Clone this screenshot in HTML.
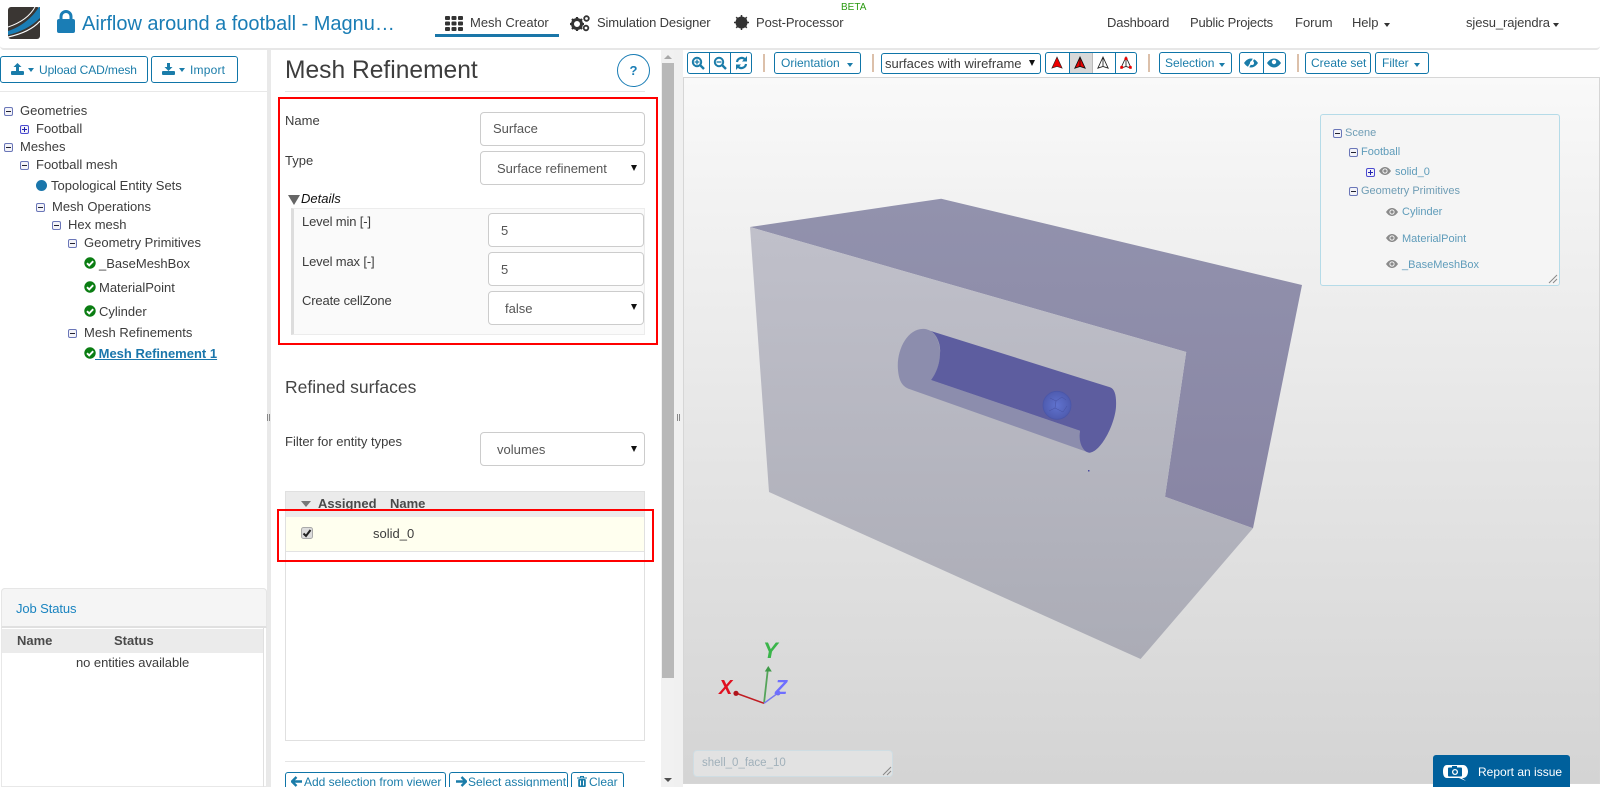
<!DOCTYPE html>
<html><head><meta charset="utf-8"><title>Mesh Refinement</title>
<style>
*{box-sizing:border-box}
html{margin:0;padding:0;width:1600px;height:787px;overflow:hidden}
body{margin:0;padding:0;width:1600px;height:787px;overflow:hidden;position:relative;background:#fff;font-family:"Liberation Sans",sans-serif;font-size:13px;color:#3c3c3c}
.a,.t,.btn,.box,.sel{position:absolute}
.t{white-space:nowrap;line-height:20px;height:20px}
.btn{border:1px solid #0f75a8;border-radius:3px;background:#fff;color:#1a7ca9;font-size:12px;line-height:20px;white-space:nowrap}
.box{border:1px solid #ccc;border-radius:4px;background:#fff}
.tri{position:absolute;width:0;height:0;border-left:3.5px solid transparent;border-right:3.5px solid transparent;border-top:6px solid #111}
.car{position:absolute;width:0;height:0;border-left:3.5px solid transparent;border-right:3.5px solid transparent;border-top:4px solid currentColor}
.sep{position:absolute;width:2px;top:54px;height:18px;background:#dcc0aa}
.m,.p{position:absolute;width:9px;height:9px;border:1px solid #6a76b8;border-radius:2px;background:#f3f3f8}
.m:after,.p:after{content:"";position:absolute;left:1px;top:3px;width:5px;height:1px;background:#223}
.p{border-color:#4b4bd0}
.p:after{background:#2222b0}
.p:before{content:"";position:absolute;left:3px;top:1px;width:1px;height:5px;background:#2222b0}
.s{color:#5f9cba;font-size:11px}
.div{position:absolute;top:0;bottom:0;width:1px;background:#0f75a8}
.grip{position:absolute;width:1px;height:7px;background:#888}
</style></head>
<body>
<svg width="0" height="0" style="position:absolute">
<symbol id="ck" viewBox="0 0 12 12"><circle cx="6" cy="6" r="5.7" fill="#0a7d12"/><path d="M3 6.2l2.2 2.2L9.2 4.2" fill="none" stroke="#fff" stroke-width="1.9"/></symbol>
<symbol id="eye" viewBox="0 0 12 8"><path d="M0 4C2 1 4 0 6 0s4 1 6 4c-2 3-4 4-6 4S2 7 0 4z" fill="#8a8a8a"/><circle cx="6" cy="4" r="2.6" fill="#f4f4f4"/><circle cx="6" cy="4" r="1.6" fill="#8a8a8a"/></symbol>
</svg>

<!-- header -->
<div class="a" style="left:0;top:0;width:1600px;height:50px;background:#fff;border-bottom:2px solid #e7e7e7;border-radius:0 0 4px 4px"></div>
<svg class="a" style="left:8px;top:7px" width="32" height="32" viewBox="0 0 32 32"><rect width="32" height="32" rx="3" fill="#3a3633"/><path d="M0 24C13 20 24 11 31 0h1v11C24 19 13 25 0 28z" fill="#1a7db5"/><path d="M0 20C12 16 22 9 27 0" fill="none" stroke="#fff" stroke-width="1"/><path d="M0 30C14 27 25 22 32 14" fill="none" stroke="#fff" stroke-width="1.2"/></svg>
<svg class="a" style="left:57px;top:10px" width="18" height="23" viewBox="0 0 18 23"><path d="M4 10V6.5a5 5 0 0 1 10 0V10" fill="none" stroke="#1a7db5" stroke-width="3"/><rect y="9" width="18" height="14" rx="2" fill="#1a7db5"/></svg>
<div class="t" style="left:82px;top:14px;font-size:20px;color:#1a7db5;line-height:20px;letter-spacing:-.02px">Airflow around a football - Magnu…</div>

<svg class="a" style="left:445px;top:16px" width="18" height="15" viewBox="0 0 18 15" fill="#333"><rect width="5" height="4" rx="1"/><rect x="6.5" width="5" height="4" rx="1"/><rect x="13" width="5" height="4" rx="1"/><rect y="5.5" width="5" height="4" rx="1"/><rect x="6.5" y="5.5" width="5" height="4" rx="1"/><rect x="13" y="5.5" width="5" height="4" rx="1"/><rect y="11" width="5" height="4" rx="1"/><rect x="6.5" y="11" width="5" height="4" rx="1"/><rect x="13" y="11" width="5" height="4" rx="1"/></svg>
<div class="t" style="left:470px;top:13px">Mesh Creator</div>
<div class="a" style="left:435px;top:34px;width:124px;height:3px;background:#1a76a8"></div>

<svg class="a" style="left:570px;top:14px" width="21" height="18" viewBox="0 0 21 18" fill="#333"><circle cx="7" cy="10" r="4.5" fill="none" stroke="#333" stroke-width="3"/><path d="M7 3v2M7 15v2M0 10h2M12 10h2M2 5l1.5 1.5M12 15l-1.5-1.5M2 15l1.5-1.5M12 5l-1.5 1.5" stroke="#333" stroke-width="2.2"/><circle cx="16.5" cy="4.5" r="2.3" fill="none" stroke="#333" stroke-width="1.8"/><circle cx="16" cy="14" r="2.3" fill="none" stroke="#333" stroke-width="1.8"/></svg>
<div class="t" style="left:597px;top:13px;letter-spacing:-.15px">Simulation Designer</div>
<svg class="a" style="left:734px;top:15px" width="15" height="15" viewBox="0 0 15 15"><circle cx="7.5" cy="7.5" r="6" fill="#333"/><path d="M7.5 0v15M0 7.5h15M2.2 2.2l10.600 10.600M12.800 2.2L2.2 12.800" stroke="#333" stroke-width="1.5"/></svg>
<div class="t" style="left:756px;top:13px;letter-spacing:-.1px">Post-Processor</div>
<div class="t" style="left:841px;top:-2px;font-size:10px;color:#2a9a10">BETA</div>

<div class="t" style="left:1107px;top:13px;letter-spacing:-.15px">Dashboard</div>
<div class="t" style="left:1190px;top:13px;letter-spacing:-.2px">Public Projects</div>
<div class="t" style="left:1295px;top:13px">Forum</div>
<div class="t" style="left:1352px;top:13px;letter-spacing:-.1px">Help</div>
<div class="car" style="left:1384px;top:23px;color:#333"></div>
<div class="t" style="left:1466px;top:13px;letter-spacing:-.1px">sjesu_rajendra</div>
<div class="car" style="left:1553px;top:23px;color:#333"></div>

<!-- left panel -->
<div class="btn" style="left:0;top:56px;width:148px;height:27px;padding-left:38px;line-height:26px;letter-spacing:-.1px">Upload CAD/mesh</div>
<svg class="a" style="left:11px;top:63px" width="13" height="12" viewBox="0 0 13 12" fill="#1a7ca9"><path d="M6.5 0L10.5 4H8v4H5V4H2.5z"/><rect y="8" width="13" height="4" rx="1"/></svg>
<div class="car" style="left:28px;top:68px;color:#1a7ca9"></div>
<div class="btn" style="left:151px;top:56px;width:87px;height:27px;padding-left:38px;line-height:26px;letter-spacing:.2px">Import</div>
<svg class="a" style="left:162px;top:63px" width="13" height="12" viewBox="0 0 13 12" fill="#1a7ca9"><path d="M6.5 8L10.5 4H8V0H5v4H2.5z"/><rect y="8" width="13" height="4" rx="1"/></svg>
<div class="car" style="left:179px;top:68px;color:#1a7ca9"></div>
<div class="a" style="left:0;top:91px;width:267px;height:1px;background:#e8e8e8"></div>

<i class="m" style="left:4px;top:107px"></i><div class="t" style="left:20px;top:101px">Geometries</div>
<i class="p" style="left:20px;top:125px"></i><div class="t" style="left:36px;top:119px">Football</div>
<i class="m" style="left:4px;top:143px"></i><div class="t" style="left:20px;top:137px">Meshes</div>
<i class="m" style="left:20px;top:161px"></i><div class="t" style="left:36px;top:155px">Football mesh</div>
<div class="a" style="left:36px;top:180px;width:11px;height:11px;border-radius:50%;background:#1a76ab"></div><div class="t" style="left:51px;top:176px">Topological Entity Sets</div>
<i class="m" style="left:36px;top:203px"></i><div class="t" style="left:52px;top:197px">Mesh Operations</div>
<i class="m" style="left:52px;top:221px"></i><div class="t" style="left:68px;top:215px">Hex mesh</div>
<i class="m" style="left:68px;top:239px"></i><div class="t" style="left:84px;top:233px">Geometry Primitives</div>
<svg class="a" style="left:84px;top:257px" width="12" height="12"><use href="#ck"/></svg><div class="t" style="left:99px;top:254px">_BaseMeshBox</div>
<svg class="a" style="left:84px;top:281px" width="12" height="12"><use href="#ck"/></svg><div class="t" style="left:99px;top:278px">MaterialPoint</div>
<svg class="a" style="left:84px;top:305px" width="12" height="12"><use href="#ck"/></svg><div class="t" style="left:99px;top:302px">Cylinder</div>
<i class="m" style="left:68px;top:329px"></i><div class="t" style="left:84px;top:323px">Mesh Refinements</div>
<svg class="a" style="left:84px;top:347px" width="12" height="12"><use href="#ck"/></svg><div class="t" style="left:95px;top:344px;font-weight:bold;color:#1a76ab;text-decoration:underline">&nbsp;Mesh Refinement 1</div>

<div class="a" style="left:1px;top:588px;width:266px;height:199px;border:1px solid #e8e8e8;border-radius:4px 4px 0 0;background:#fff"></div>
<div class="a" style="left:1px;top:588px;width:266px;height:40px;background:#f5f5f5;border:1px solid #e6e6e6;border-bottom:2px solid #e0e0e0;border-radius:4px 4px 0 0"></div>
<div class="t" style="left:16px;top:599px;color:#1a84c0;letter-spacing:-.1px">Job Status</div>
<div class="a" style="left:2px;top:629px;width:261px;height:24px;background:#ebebeb"></div>
<div class="a" style="left:263px;top:628px;width:1px;height:159px;background:#e0e0e0"></div>
<div class="t" style="left:17px;top:631px;font-weight:bold;color:#4a4a4a">Name</div>
<div class="t" style="left:114px;top:631px;font-weight:bold;color:#4a4a4a">Status</div>
<div class="t" style="left:76px;top:653px;font-size:13px;letter-spacing:-.05px">no entities available</div>

<div class="a" style="left:267px;top:50px;width:4px;height:737px;background:#e9e9e9"></div>
<i class="grip" style="left:267px;top:414px"></i><i class="grip" style="left:269px;top:414px"></i>

<!-- center panel -->
<div class="t" style="left:285px;top:59px;font-size:24.6px;line-height:24px;height:24px;color:#3d3d3d">Mesh Refinement</div>
<div class="a" style="left:617px;top:54px;width:33px;height:33px;border:1px solid #1a7db5;border-radius:50%;color:#1a7db5;font-weight:bold;font-size:13px;line-height:31px;text-align:center">?</div>
<div class="a" style="left:285px;top:91px;width:360px;height:1px;background:#e5e5e5"></div>
<div class="a" style="left:278px;top:97px;width:380px;height:248px;border:2px solid #f00"></div>

<div class="t" style="left:285px;top:111px">Name</div>
<div class="box" style="left:480px;top:112px;width:165px;height:34px"></div>
<div class="t" style="left:493px;top:119px;color:#555">Surface</div>
<div class="t" style="left:285px;top:151px">Type</div>
<div class="box" style="left:480px;top:151px;width:165px;height:34px"></div>
<div class="t" style="left:497px;top:159px;color:#555">Surface refinement</div>
<div class="tri" style="left:631px;top:165px"></div>

<div class="a" style="left:288px;top:195px;width:0;height:0;border-left:6px solid transparent;border-right:6px solid transparent;border-top:10px solid #666"></div>
<div class="t" style="left:301px;top:189px;font-style:italic;color:#111">Details</div>
<div class="a" style="left:291px;top:208px;width:354px;height:127px;background:#fafafa;border:1px solid #ececec;border-left:3px solid #ddd"></div>
<div class="t" style="left:302px;top:212px;letter-spacing:-.15px">Level min [-]</div>
<div class="box" style="left:488px;top:213px;width:156px;height:34px"></div>
<div class="t" style="left:501px;top:221px;color:#555">5</div>
<div class="t" style="left:302px;top:252px;letter-spacing:-.15px">Level max [-]</div>
<div class="box" style="left:488px;top:252px;width:156px;height:34px"></div>
<div class="t" style="left:501px;top:260px;color:#555">5</div>
<div class="t" style="left:302px;top:291px;letter-spacing:-.15px">Create cellZone</div>
<div class="box" style="left:488px;top:291px;width:156px;height:34px"></div>
<div class="t" style="left:505px;top:299px;color:#555">false</div>
<div class="tri" style="left:631px;top:304px"></div>

<div class="t" style="left:285px;top:377px;font-size:17.5px;color:#444">Refined surfaces</div>
<div class="t" style="left:285px;top:432px">Filter for entity types</div>
<div class="box" style="left:480px;top:432px;width:165px;height:34px"></div>
<div class="t" style="left:497px;top:440px;color:#555">volumes</div>
<div class="tri" style="left:631px;top:446px"></div>

<div class="a" style="left:285px;top:491px;width:360px;height:250px;border:1px solid #e0e0e0;background:#fff"></div>
<div class="a" style="left:286px;top:492px;width:358px;height:25px;background:#ebebeb"></div>
<div class="a" style="left:301px;top:501px;width:0;height:0;border-left:5px solid transparent;border-right:5px solid transparent;border-top:6px solid #777"></div>
<div class="t" style="left:318px;top:494px;font-weight:bold;color:#4a4a4a">Assigned</div>
<div class="t" style="left:390px;top:494px;font-weight:bold;color:#4a4a4a">Name</div>
<div class="a" style="left:286px;top:517px;width:358px;height:35px;background:#ffffef;border-bottom:1px solid #e3e3e3"></div>
<svg class="a" style="left:301px;top:527px" width="12" height="12" viewBox="0 0 12 12"><rect x=".5" y=".5" width="11" height="11" rx="2" fill="#dcdcdc" stroke="#aaa"/><path d="M2.5 6.5L5 9l4.5-6" fill="none" stroke="#222" stroke-width="2"/></svg>
<div class="t" style="left:373px;top:524px">solid_0</div>
<div class="a" style="left:277px;top:509px;width:377px;height:53px;border:2px solid #f00"></div>

<div class="a" style="left:285px;top:761px;width:360px;height:1px;background:#e5e5e5"></div>
<div class="btn" style="left:285px;top:772px;width:161px;height:15px;border-bottom:0;border-radius:3px 3px 0 0;padding-left:18px;font-size:12px;line-height:19px">Add selection from viewer</div>
<svg class="a" style="left:291px;top:776px" width="11" height="11" viewBox="0 0 11 11"><path d="M5.5 1L1 5.5 5.5 10M1.5 5.5H11" fill="none" stroke="#1a7ca9" stroke-width="2.4"/></svg>
<div class="btn" style="left:449px;top:772px;width:119px;height:15px;border-bottom:0;border-radius:3px 3px 0 0;padding-left:18px;font-size:12px;line-height:19px">Select assignment</div>
<svg class="a" style="left:456px;top:776px" width="11" height="11" viewBox="0 0 11 11"><path d="M5.5 1L10 5.5 5.5 10M9.5 5.5H0" fill="none" stroke="#1a7ca9" stroke-width="2.4"/></svg>
<div class="btn" style="left:571px;top:772px;width:53px;height:15px;border-bottom:0;border-radius:3px 3px 0 0;padding-left:17px;font-size:12px;line-height:19px">Clear</div>
<svg class="a" style="left:577px;top:776px" width="10" height="11" viewBox="0 0 10 11"><path d="M0 2h10M3.5 2V.5h3V2" fill="none" stroke="#1a7ca9"/><rect x="1.2" y="3" width="7.6" height="8" rx="1" fill="#1a7ca9"/><path d="M3.5 4.5v5M6.5 4.5v5" stroke="#fff"/></svg>

<!-- scrollbar -->
<div class="a" style="left:661px;top:50px;width:13px;height:737px;background:#f1f1f1"></div>
<div class="a" style="left:662px;top:63px;width:12px;height:615px;background:#b8b8b8"></div>
<div class="a" style="left:664px;top:55px;width:0;height:0;border-left:4px solid transparent;border-right:4px solid transparent;border-bottom:4px solid #a8a8a8"></div>
<div class="a" style="left:664px;top:778px;width:0;height:0;border-left:4px solid transparent;border-right:4px solid transparent;border-top:4px solid #505050"></div>
<div class="a" style="left:674px;top:50px;width:9px;height:737px;background:#f0f0f0"></div>
<i class="grip" style="left:677px;top:414px"></i><i class="grip" style="left:679px;top:414px"></i>

<!-- toolbar -->
<div class="btn" style="left:687px;top:52px;width:65px;height:22px"><i class="div" style="left:21px"></i><i class="div" style="left:42px"></i></div>
<svg class="a" style="left:691px;top:56px" width="14" height="14" viewBox="0 0 14 14"><circle cx="6" cy="6" r="4.2" fill="none" stroke="#1a7ca9" stroke-width="2"/><path d="M9 9l4 4" stroke="#1a7ca9" stroke-width="2.4"/><path d="M6 3.5v5M3.5 6h5" stroke="#1a7ca9" stroke-width="1.3"/></svg>
<svg class="a" style="left:713px;top:56px" width="14" height="14" viewBox="0 0 14 14"><circle cx="6" cy="6" r="4.2" fill="none" stroke="#1a7ca9" stroke-width="2"/><path d="M9 9l4 4" stroke="#1a7ca9" stroke-width="2.4"/><path d="M3.5 6h5" stroke="#1a7ca9" stroke-width="1.3"/></svg>
<svg class="a" style="left:735px;top:56px" width="13" height="14" viewBox="0 0 13 14"><path d="M2 6a4.6 4.6 0 0 1 8-2.5M11 8a4.6 4.6 0 0 1-8 2.5" fill="none" stroke="#1a7ca9" stroke-width="2.2"/><path d="M12 0v5.5H7zM1 14V8.5h5z" fill="#1a7ca9"/></svg>
<i class="sep" style="left:763px"></i>
<div class="btn" style="left:774px;top:52px;width:87px;height:22px;padding-left:6px">Orientation</div>
<div class="car" style="left:847px;top:63px;color:#1a7ca9"></div>
<i class="sep" style="left:872px"></i>
<div class="a" style="left:881px;top:53px;width:160px;height:21px;border:1px solid #0f75a8;border-radius:3px"></div>
<div class="t" style="left:885px;top:54px">surfaces with wireframe</div>
<div class="tri" style="left:1029px;top:60px"></div>

<div class="btn" style="left:1045px;top:52px;width:92px;height:22px;overflow:hidden"><i class="a" style="left:23px;top:0;width:24px;height:20px;background:#d8d8d8"></i><i class="div" style="left:23px"></i><i class="div" style="left:46px;background:#bbb"></i><i class="div" style="left:69px"></i></div>
<svg class="a" style="left:1051px;top:56px" width="12" height="14" viewBox="0 0 14 16"><path d="M7 1L1 14l6-2 6 2z" fill="#e00" stroke="#222" stroke-width=".7"/></svg>
<svg class="a" style="left:1074px;top:56px" width="12" height="14" viewBox="0 0 14 16"><path d="M7 1L1 14l6-2 6 2z" fill="#e00" stroke="#111" stroke-width="1"/><path d="M7 1v11" stroke="#111"/></svg>
<svg class="a" style="left:1097px;top:56px" width="12" height="14" viewBox="0 0 14 16"><path d="M7 1L1 14l6-2 6 2zM7 1v11" fill="#fff" stroke="#222" stroke-width="1"/></svg>
<svg class="a" style="left:1120px;top:56px" width="12" height="14" viewBox="0 0 14 16"><path d="M7 1L1 14l6-2 6 2zM7 1v11" fill="#fff" stroke="#222" stroke-width="1"/><circle cx="7" cy="3" r="1.8" fill="#e00"/><circle cx="2" cy="13" r="1.8" fill="#e00"/><circle cx="12" cy="13" r="1.8" fill="#e00"/></svg>
<i class="sep" style="left:1148px"></i>
<div class="btn" style="left:1159px;top:52px;width:73px;height:22px;padding-left:5px">Selection</div>
<div class="car" style="left:1219px;top:63px;color:#1a7ca9"></div>
<div class="btn" style="left:1239px;top:52px;width:47px;height:22px"><i class="div" style="left:23px"></i></div>
<svg class="a" style="left:1244px;top:58px" width="14" height="10" viewBox="0 0 14 10"><path d="M0 5c2-3 4.5-4.5 7-4.5S12 2 14 5c-2 3-4.5 4.5-7 4.500S2 8 0 5z" fill="#1a7ca9"/><circle cx="8" cy="5" r="2" fill="#fff"/><path d="M10 0L4 10" stroke="#fff" stroke-width="1.4"/></svg>
<svg class="a" style="left:1267px;top:58px" width="14" height="10" viewBox="0 0 14 10"><path d="M0 5c2-3 4.5-4.5 7-4.5S12 2 14 5c-2 3-4.5 4.5-7 4.500S2 8 0 5z" fill="#1a7ca9"/><circle cx="7" cy="4" r="2.2" fill="#fff"/></svg>
<i class="sep" style="left:1297px"></i>
<div class="btn" style="left:1305px;top:52px;width:66px;height:22px;padding-left:5px;line-height:21px">Create set</div>
<div class="btn" style="left:1375px;top:52px;width:54px;height:22px;padding-left:6px">Filter</div>
<div class="car" style="left:1414px;top:63px;color:#1a7ca9"></div>

<!-- viewer -->
<div class="a" style="left:683px;top:77px;width:917px;height:707px;border:1px solid #d6d6d6;background:linear-gradient(#f9f9f9,#f3f3f3 15%,#d4d4d4)"></div>
<svg class="a" style="left:683px;top:77px" width="917" height="707" viewBox="683 77 917 707">
<defs>
<linearGradient id="gt" x1="0" y1="199" x2="0" y2="528" gradientUnits="userSpaceOnUse"><stop offset="0" stop-color="#9292ad"/><stop offset="1" stop-color="#8885a4"/></linearGradient>
<linearGradient id="gf" x1="0" y1="227" x2="0" y2="659" gradientUnits="userSpaceOnUse"><stop offset="0" stop-color="#c0c0ca"/><stop offset="1" stop-color="#abacb6"/></linearGradient>
<radialGradient id="gb"><stop offset="0" stop-color="#6073cf"/><stop offset="1" stop-color="#4f5cb0"/></radialGradient>
</defs>
<polygon points="750,227 941.2,198.7 1302,285 1253,528.3 1165,496.7 1186.2,352" fill="url(#gt)"/>
<polygon points="750,227 1186.2,352 1165,496.7 1253,528.3 1140.6,659 769,492" fill="url(#gf)"/>
<path d="M925 329C908 327 896 350 898 370C899 382 903 387 910 389.3L1089.3 452.7C1083 451 1078 440 1080 430.7L931 380C938 372 941 358 940 350C939 338 933 330 925 329Z" fill="#8c8dad"/>
<path d="M930 330.7C937 334 941 345 940 353C940 365 935 375 931 380L1080 430.7C1078 442 1083 452 1089.3 452.7C1101 452 1115 424 1116 406.7C1116.5 396 1115 389 1110 387.3Z" fill="#5d5d9f"/>
<circle cx="1057" cy="405.3" r="14" fill="url(#gb)" stroke="#4a56a8" stroke-width=".8"/>
<path d="M1050 398l6 3 6-4M1056 401l-1 7-6 3M1055 408l8 4M1063 412l4-6M1062 397l4 3" fill="none" stroke="#4650a0" stroke-width=".5"/>
<rect x="1088" y="470" width="1.5" height="1.5" fill="#4a4aa0"/>
<!-- axes -->
<path d="M764 703.3L768 668" stroke="#55a45a" stroke-width="1.8"/><path d="M768.3 666l-3.5 5.5h7z" fill="#3f9a48"/>
<path d="M764 703.3L737 693.5" stroke="#c01c22" stroke-width="1.5"/><circle cx="736" cy="693.3" r="2.6" fill="#b0141c"/>
<path d="M764 703.3L778 693" stroke="#7878ee" stroke-width="1.5"/><circle cx="778" cy="693" r="2.5" fill="#6f6fee"/>
<text x="763" y="658" font-family="Liberation Sans" font-style="italic" font-weight="bold" font-size="22" fill="#3ab54a">Y</text>
<text x="719" y="694" font-family="Liberation Sans" font-style="italic" font-weight="bold" font-size="20" fill="#e01020">X</text>
<text x="775" y="694" font-family="Liberation Sans" font-style="italic" font-weight="bold" font-size="20" fill="#6f6fff">Z</text>
</svg>

<!-- scene tree -->
<div class="a" style="left:1320px;top:114px;width:240px;height:172px;background:#f5f5f5;border:1px solid #b5dbe8;border-radius:3px"></div>
<svg class="a" style="left:1548px;top:274px" width="10" height="10"><path d="M1 9L9 1M5 9L9 5" stroke="#888"/></svg>
<i class="m" style="left:1333px;top:129px"></i><div class="t s" style="left:1345px;top:123px;color:#6f9db5">Scene</div>
<i class="m" style="left:1349px;top:148px"></i><div class="t s" style="left:1361px;top:142px">Football</div>
<i class="p" style="left:1366px;top:168px"></i><svg class="a" style="left:1379px;top:167px" width="12" height="8"><use href="#eye"/></svg><div class="t s" style="left:1395px;top:162px">solid_0</div>
<i class="m" style="left:1349px;top:187px"></i><div class="t s" style="left:1361px;top:181px;color:#6f9db5">Geometry Primitives</div>
<svg class="a" style="left:1386px;top:208px" width="12" height="8"><use href="#eye"/></svg><div class="t s" style="left:1402px;top:202px">Cylinder</div>
<svg class="a" style="left:1386px;top:234px" width="12" height="8"><use href="#eye"/></svg><div class="t s" style="left:1402px;top:229px">MaterialPoint</div>
<svg class="a" style="left:1386px;top:260px" width="12" height="8"><use href="#eye"/></svg><div class="t s" style="left:1402px;top:255px">_BaseMeshBox</div>

<!-- selection box -->
<div class="a" style="left:693px;top:750px;width:200px;height:27px;background:#e2e2e2;border:1px solid #cfdde3;border-radius:4px"></div>
<div class="t" style="left:702px;top:753px;font-size:11.5px;color:#a0b0ba">shell_0_face_10</div>
<svg class="a" style="left:882px;top:766px" width="10" height="10"><path d="M1 9L9 1M5 9L9 5" stroke="#888"/></svg>

<!-- report -->
<div class="a" style="left:1433px;top:755px;width:137px;height:32px;background:#00609c;border-radius:3px 3px 0 0"></div>
<svg class="a" style="left:1443px;top:764px" width="25" height="17" viewBox="0 0 25 17"><path d="M4 1h16c3 0 5 3 5 6.5S23 14 20 14h-1l4 3-7-3H4c-3 0-4-3-4-6.5S1 1 4 1z" fill="#fff"/><rect x="5" y="3.5" width="14" height="9" rx="1" fill="#00609c"/><rect x="9" y="2" width="5" height="3" fill="#00609c"/><circle cx="12" cy="8" r="3" fill="#fff"/><circle cx="12" cy="8" r="1.7" fill="#00609c"/></svg>
<div class="t" style="left:1478px;top:762px;color:#fff;font-size:12px">Report an issue</div>
</body></html>
